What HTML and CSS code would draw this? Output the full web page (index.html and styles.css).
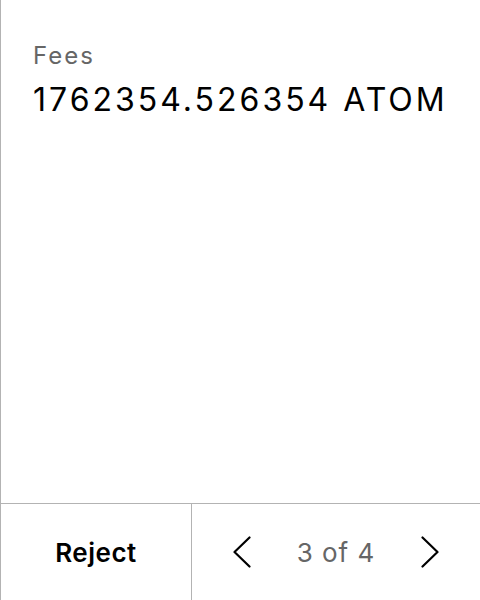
FILE: index.html
```html
<!DOCTYPE html>
<html>
<head>
<meta charset="utf-8">
<link rel="stylesheet" href="styles.css">
</head>
<body>
<div class="panel">
  <div class="content">
    <div class="label">Fees</div>
    <div class="value">1762354.526354 ATOM</div>
  </div>
  <div class="footer">
    <button class="reject">Reject</button>
    <div class="pager">
      <span class="chev">
        <svg width="18" height="32" viewBox="0 0 18 32"><path d="M16.5 1.5 L1.5 16 L16.5 30.5" fill="none" stroke="#000" stroke-width="2.2" stroke-linecap="round" stroke-linejoin="round"/></svg>
      </span>
      <span class="count">3 of 4</span>
      <span class="chev">
        <svg width="18" height="32" viewBox="0 0 18 32"><path d="M1.5 1.5 L16.5 16 L1.5 30.5" fill="none" stroke="#000" stroke-width="2.2" stroke-linecap="round" stroke-linejoin="round"/></svg>
      </span>
    </div>
  </div>
</div>
</body>
</html>
```
FILE: styles.css
```css
html, body {
  margin: 0;
  padding: 0;
  background: #fff;
}
body {
  font-family: Inter, "Noto Sans", sans-serif;
  color: #000;
}
.panel {
  width: 480px;
  height: 600px;
  box-sizing: border-box;
  border-left: 1px solid #b3b3b3;
  display: flex;
  flex-direction: column;
}
.content {
  flex: 1;
  padding: 40px 32px 0 32px;
}
.label {
  font-size: 24px;
  line-height: 32px;
  color: #666;
  letter-spacing: 2px;
}
.value {
  font-size: 32px;
  line-height: 44px;
  color: #000;
  margin-top: 6px;
  letter-spacing: 3px;
}
.footer {
  height: 96px;
  border-top: 1px solid #b3b3b3;
  display: flex;
}
.reject {
  width: 191px;
  border: none;
  border-right: 1px solid #b3b3b3;
  background: #fff;
  font-family: Inter, "Noto Sans", sans-serif;
  font-size: 26px;
  font-weight: 600;
  letter-spacing: 0.5px;
  color: #000;
  padding: 0;
}
.pager {
  flex: 1;
  display: flex;
  align-items: center;
  justify-content: center;
  gap: 46px;
}
.chev {
  display: flex;
}
.count {
  font-size: 26px;
  color: #666;
  letter-spacing: 1px;
}
```
